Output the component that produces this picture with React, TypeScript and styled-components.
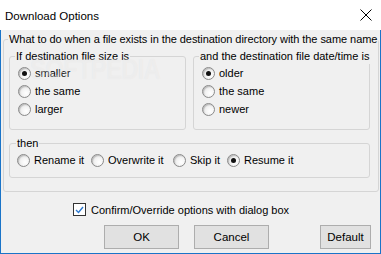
import React from 'react';
import styled, { createGlobalStyle } from 'styled-components';

const GlobalStyle = createGlobalStyle`
  html, body {
    margin: 0;
    padding: 0;
    background: #ffffff;
  }
  body {
    font-family: "Liberation Sans", Arial, sans-serif;
    font-size: 11px;
    color: #000000;
  }
`;

const Window = styled.div`
  position: relative;
  width: 381px;
  height: 254px;
  box-sizing: border-box;
  display: flex;
  flex-direction: column;
  overflow: hidden;
`;

const TitleBar = styled.div`
  height: 30px;
  flex: none;
  display: flex;
  align-items: center;
  justify-content: space-between;
  padding: 0 9px 0 5px;
  background: #ffffff;
`;

const Title = styled.span`
  font-size: 11.5px;
  line-height: 15px;
  margin-top: 2px;
`;

const Body = styled.div`
  flex: 1;
  display: flex;
  flex-direction: column;
  background: #f0f0f0;
  border: 1px solid #1a74c8;
  border-top: none;
  padding: 2px 1px 0 2px;
`;

const Group = styled.fieldset<{ $pl?: number; $pr?: number; $pb?: number }>`
  margin: 0;
  min-width: 0;
  border: 1px solid #d5d5d5;
  border-radius: 3px;
  padding: 0 ${(p) => p.$pr ?? 8}px ${(p) => p.$pb ?? 0}px ${(p) => p.$pl ?? 8}px;
`;

const Legend = styled.legend<{ $ml?: number; $tight?: boolean }>`
  margin-left: ${(p) => p.$ml ?? 0}px;
  padding: 0 1px;
  line-height: 15px;
  white-space: nowrap;
  letter-spacing: ${(p) => (p.$tight ? '-0.06px' : 'normal')};
`;

const Columns = styled.div`
  display: flex;
  gap: 7px;
  margin-top: 2px;
`;

const Column = styled(Group)`
  flex: 1;
`;

const ThenGroup = styled(Group)`
  margin-top: 6px;
`;

const OptionList = styled.div`
  display: flex;
  flex-direction: column;
`;

const OptionRow = styled.div`
  display: flex;
`;

const Option = styled.label<{ $w?: number }>`
  display: flex;
  align-items: center;
  gap: 4px;
  height: 18px;
  white-space: nowrap;
  width: ${(p) => (p.$w ? `${p.$w}px` : 'auto')};
  flex: none;
`;

const RadioDot = styled.span<{ $on?: boolean }>`
  position: relative;
  width: 11px;
  height: 11px;
  flex: none;
  border-radius: 50%;
  border: 1px solid #8a8a8a;
  background: radial-gradient(circle at 65% 65%, #ffffff 0%, #f4f4f4 40%, #d6d6d6 100%);
  box-shadow: inset 1px 1px 1px rgba(0, 0, 0, 0.18);
  &::after {
    content: '';
    display: ${(p) => (p.$on ? 'block' : 'none')};
    position: absolute;
    left: 3px;
    top: 3px;
    width: 5px;
    height: 5px;
    border-radius: 50%;
    background: #111111;
  }
`;

const CheckRow = styled.label`
  display: flex;
  align-items: center;
  gap: 5px;
  margin-top: 10px;
  padding-left: 70px;
  height: 15px;
`;

const CheckBox = styled.span`
  width: 11px;
  height: 11px;
  flex: none;
  border: 1px solid #333333;
  background: #ffffff;
  display: flex;
  align-items: center;
  justify-content: center;
`;

const ButtonRow = styled.div`
  display: flex;
  margin-top: 8px;
  padding: 0 8px 0 101px;
  gap: 15px;
`;

const Button = styled.button<{ $w?: number; $push?: boolean }>`
  width: ${(p) => p.$w ?? 75}px;
  height: 24px;
  margin-left: ${(p) => (p.$push ? 'auto' : '0')};
  background: #e1e1e1;
  border: 1px solid #adadad;
  font-family: inherit;
  font-size: 11.5px;
  color: #000000;
  padding: 0;
`;

const Watermark = styled.div`
  position: absolute;
  left: 30px;
  top: 52px;
  font-size: 30px;
  font-weight: bold;
  letter-spacing: -1px;
  transform: scaleX(0.8);
  transform-origin: left top;
  color: rgba(255, 255, 255, 0.35);
  text-shadow: 0 0 1px rgba(0, 0, 0, 0.05);
  pointer-events: none;
`;

type Choice = { label: string; on?: boolean; w?: number };

const sizes: Choice[] = [{ label: 'smaller', on: true }, { label: 'the same' }, { label: 'larger' }];

const dates: Choice[] = [{ label: 'older', on: true }, { label: 'the same' }, { label: 'newer' }];

const actions: Choice[] = [
  { label: 'Rename it', w: 74 },
  { label: 'Overwrite it', w: 82 },
  { label: 'Skip it', w: 54 },
  { label: 'Resume it', on: true },
];

const Radio = ({ label, on, w }: Choice) => (
  <Option $w={w}>
    <RadioDot $on={on} />
    <span>{label}</span>
  </Option>
);

export default function App() {
  return (
    <Window>
      <GlobalStyle />
      <TitleBar>
        <Title>Download Options</Title>
        <svg width="12" height="12" viewBox="0 0 12 12">
          <path d="M0.5 0.5 L11.5 11.5 M11.5 0.5 L0.5 11.5" stroke="#000" strokeWidth="1" />
        </svg>
      </TitleBar>
      <Body>
        <Group $pl={5} $pr={8} $pb={13}>
          <Legend $ml={-1} $tight>
            What to do when a file exists in the destination directory with the same name
          </Legend>
          <Columns>
            <Column $pb={11}>
              <Legend $ml={-3}>If destination file size is</Legend>
              <OptionList>
                {sizes.map((s) => (
                  <Radio key={s.label} {...s} />
                ))}
              </OptionList>
            </Column>
            <Column $pb={11}>
              <Legend $ml={-3}>and the destination file date/time is</Legend>
              <OptionList>
                {dates.map((s) => (
                  <Radio key={s.label} {...s} />
                ))}
              </OptionList>
            </Column>
          </Columns>
          <ThenGroup $pl={7} $pb={8}>
            <Legend $ml={-1}>then</Legend>
            <OptionRow>
              {actions.map((s) => (
                <Radio key={s.label} {...s} />
              ))}
            </OptionRow>
          </ThenGroup>
        </Group>
        <CheckRow>
          <CheckBox>
            <svg width="9" height="8" viewBox="0 0 9 8">
              <path d="M1 4 L3.5 6.5 L8 1" fill="none" stroke="#2a78d0" strokeWidth="1.4" />
            </svg>
          </CheckBox>
          <span>Confirm/Override options with dialog box</span>
        </CheckRow>
        <ButtonRow>
          <Button>OK</Button>
          <Button>Cancel</Button>
          <Button $w={51} $push>
            Default
          </Button>
        </ButtonRow>
      </Body>
      <Watermark>SOFTPEDIA</Watermark>
    </Window>
  );
}
